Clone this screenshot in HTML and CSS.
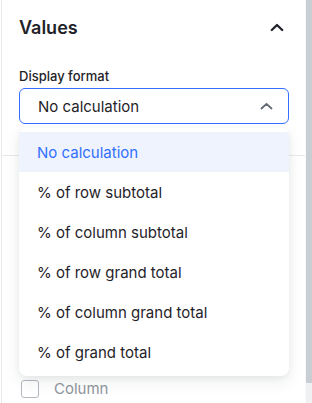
FILE: index.html
```html
<!DOCTYPE html>
<html lang="en">
<head>
  <meta charset="UTF-8" />
  <title>Values</title>
  <link rel="stylesheet" href="styles.css">
</head>
<body>
  <div class="panel">
    <div class="content">
      <!-- Section header -->
      <div class="section-head">
        <span class="section-title">Values</span>
        <svg class="chevron" width="14" height="9" viewBox="0 0 14 9">
          <path d="M1.8 7 L7 2 L12.2 7" fill="none" stroke="#1f2329" stroke-width="2.3" stroke-linecap="round" stroke-linejoin="round"/>
        </svg>
      </div>

      <label class="field-label">Display format</label>
      <div class="select-wrap">
        <div class="select">
          <span>No calculation</span>
          <svg width="13" height="8" viewBox="0 0 13 8">
            <path d="M1.5 6.5 L6.5 1.8 L11.5 6.5" fill="none" stroke="#646a73" stroke-width="1.8" stroke-linecap="round" stroke-linejoin="round"/>
          </svg>
        </div>

        <ul class="menu">
          <li class="active">No calculation</li>
          <li>% of row subtotal</li>
          <li>% of column subtotal</li>
          <li>% of row grand total</li>
          <li>% of column grand total</li>
          <li>% of grand total</li>
        </ul>
      </div>

      <div class="divider"></div>

      <div class="hidden-rows"></div>

      <label class="check-row">
        <span class="checkbox"></span>
        <span>Column</span>
      </label>
    </div>
    <div class="scrollbar"><div class="thumb"></div></div>
  </div>
</body>
</html>
```

FILE: styles.css
```css
body {
  margin: 0;
  font-family: Inter, "Noto Sans", sans-serif;
  color: #1f2329;
  background: #fff;
  overflow: hidden;
}

.panel {
  display: flex;
  height: 403px;
  padding-left: 1px;
}

.content {
  flex: 1;
  border-left: 1px solid #e8e9eb;
  display: flex;
  flex-direction: column;
  padding: 0 16px 0 17px;
  background: #fff;
}

.section-head {
  display: flex;
  align-items: center;
  justify-content: space-between;
  height: 54px;
  padding-right: 5px;
}

.section-title {
  font-size: 18px;
  font-weight: 600;
}

.field-label {
  font-size: 13px;
  font-weight: 500;
  margin-top: 14px;
  line-height: 16px;
}

.select-wrap {
  position: relative;
  margin-top: 4px;
}

.select {
  height: 34px;
  border: 1px solid #3370ff;
  border-radius: 6px;
  display: flex;
  align-items: center;
  justify-content: space-between;
  padding: 0 15px 0 18px;
  font-size: 15px;
}

.menu {
  position: absolute;
  top: 40px;
  left: 0;
  right: 0;
  margin: 0;
  padding: 4px 0;
  list-style: none;
  background: #fff;
  border-radius: 8px;
  box-shadow: 0 6px 16px rgba(31, 35, 41, 0.08), 0 2px 6px rgba(31, 35, 41, 0.06);
  z-index: 2;
}

.menu li {
  height: 40px;
  display: flex;
  align-items: center;
  padding-left: 18px;
  font-size: 15px;
}

.menu li.active {
  background: #eef3fe;
  color: #3370ff;
}

.divider {
  height: 1px;
  background: #e8e9eb;
  margin: 31px -16px 0 -17px;
}

.hidden-rows {
  height: 223px;
}

.check-row {
  display: flex;
  align-items: center;
  gap: 15px;
  font-size: 15px;
  color: #8f959e;
  padding-left: 2px;
}

.checkbox {
  width: 16px;
  height: 16px;
  border: 1px solid #b4b8bf;
  border-radius: 3px;
}

.scrollbar {
  width: 6px;
  background: #f0f1f3;
  border-left: 1px solid #fafafa;
}

.thumb {
  height: 383px;
  background: #c9cdd4;
}
```
